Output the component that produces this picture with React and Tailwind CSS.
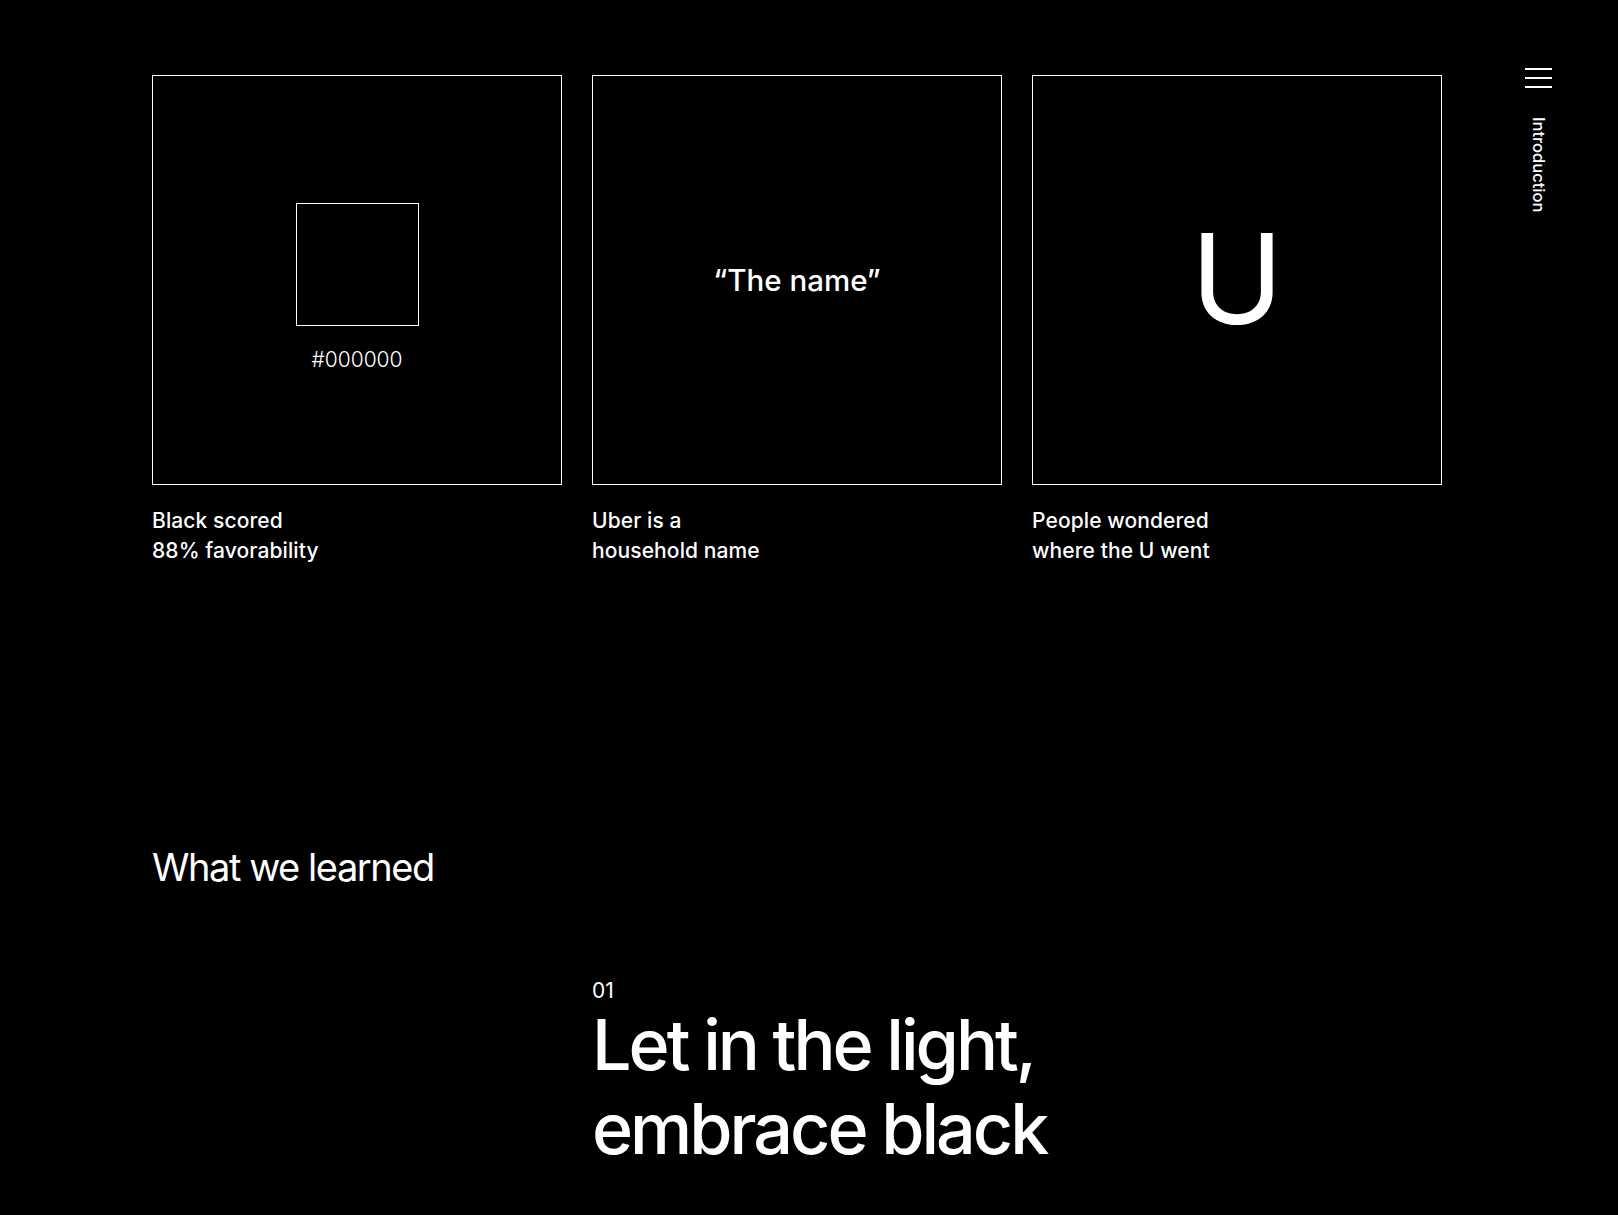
import React from "react";

const boxes = [
  { kind: "swatch", caption: ["Black scored", "88% favorability"] },
  { kind: "name", caption: ["Uber is a", "household name"] },
  { kind: "u", caption: ["People wondered", "where the U went"] },
];

function Box({ kind }) {
  return (
    <div className="w-[410px] h-[410px] border border-white flex flex-col items-center justify-center">
      {kind === "swatch" && (
        <div className="flex flex-col items-center mt-[16px]">
          <div className="w-[123px] h-[123px] border-[1.5px] border-white" />
          <div className="mt-[20px] text-[21px] leading-[28px] font-light text-white">#000000</div>
        </div>
      )}
      {kind === "name" && (
        <div className="text-[29.5px] leading-[34px] font-medium text-white mt-[0px]">“The name”</div>
      )}
      {kind === "u" && (
        <div className="text-[125px] leading-[125px] font-normal text-white mt-[-4px]">U</div>
      )}
    </div>
  );
}

export default function App() {
  return (
    <div
      className="min-h-[1215px] w-full bg-black text-white flex"
      style={{ fontFamily: "Inter, 'Noto Sans', sans-serif" }}
    >
      <div className="w-[1442px] pl-[152px] pt-[75px] pb-[44px] shrink-0">
        <div className="grid grid-cols-[410px_410px_410px] gap-x-[30px]">
          {boxes.map((b, i) => (
            <div key={i} className="flex flex-col">
              <Box kind={b.kind} />
              <div className="mt-[21px] text-[21px] leading-[30px] font-medium tracking-[0.005em] text-white">
                <div>{b.caption[0]}</div>
                <div>{b.caption[1]}</div>
              </div>
            </div>
          ))}
        </div>

        <h2 className="mt-[278px] text-[38px] leading-[46px] font-normal tracking-[-0.038em] text-white">
          What we learned
        </h2>

        <div className="mt-[89px] ml-[440px]">
          <div className="text-[21px] leading-[24px] font-normal text-white">01</div>
          <div className="text-[70px] leading-[84px] font-medium tracking-[-0.043em] text-white">
            <div>Let in the light,</div>
            <div>embrace black</div>
          </div>
        </div>
      </div>

      <div className="ml-[83px] pt-[68px] w-[27px] flex flex-col items-center">
        <div className="w-[27px] flex flex-col gap-[7px]">
          <span className="block h-[2px] bg-white" />
          <span className="block h-[2px] bg-white" />
          <span className="block h-[2px] bg-white" />
        </div>
        <div className="mt-[29px] text-[16.5px] leading-[17px] font-medium text-white [writing-mode:vertical-rl]">
          Introduction
        </div>
      </div>
    </div>
  );
}
